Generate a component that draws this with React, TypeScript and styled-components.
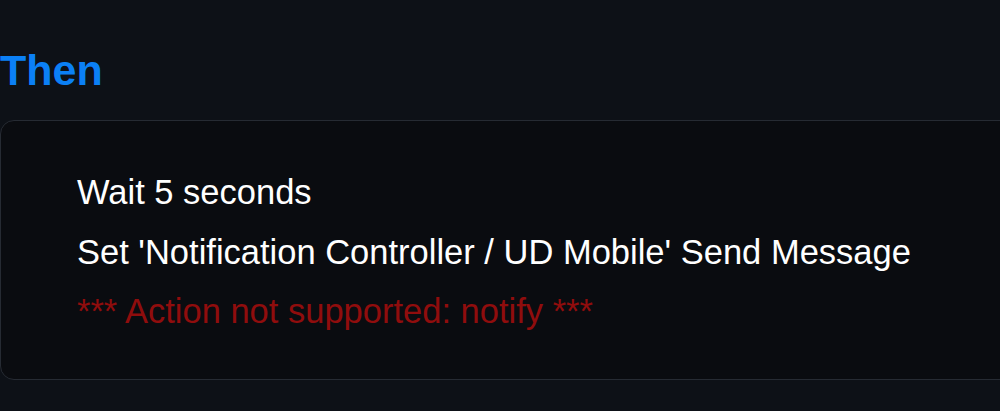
import styled, { createGlobalStyle } from 'styled-components'

const GlobalStyle = createGlobalStyle`
  html, body {
    margin: 0;
    padding: 0;
    background-color: #0d1117;
  }

  body {
    font-family: 'Liberation Sans', Arial, sans-serif;
    overflow: hidden;
  }
`

const Page = styled.div`
  height: 411px;
  padding-top: 49px;
  box-sizing: border-box;
  overflow: hidden;
`

const Heading = styled.h2`
  margin: 0 0 29px 0;
  font-size: 43px;
  line-height: 42px;
  font-weight: 700;
  color: #0b80f5;
`

const Card = styled.div`
  margin-right: -40px;
  padding: 42px 0 37px 76px;
  background-color: #0a0c10;
  border: 1px solid #262b33;
  border-radius: 14px;
`

const ActionLine = styled.div<{ $unsupported?: boolean }>`
  font-size: 34.5px;
  line-height: 59.5px;
  white-space: nowrap;
  color: ${props => props.$unsupported ? '#900d0d' : '#ffffff'};
`

const actions = [
  { text: 'Wait 5 seconds', unsupported: false },
  { text: "Set 'Notification Controller / UD Mobile' Send Message", unsupported: false },
  { text: '*** Action not supported: notify ***', unsupported: true },
]

const App = () => {
  return (
    <>
      <GlobalStyle />
      <Page>
        <Heading>Then</Heading>
        <Card>
          {actions.map(action => (
            <ActionLine key={action.text} $unsupported={action.unsupported}>
              {action.text}
            </ActionLine>
          ))}
        </Card>
      </Page>
    </>
  )
}

export default App
